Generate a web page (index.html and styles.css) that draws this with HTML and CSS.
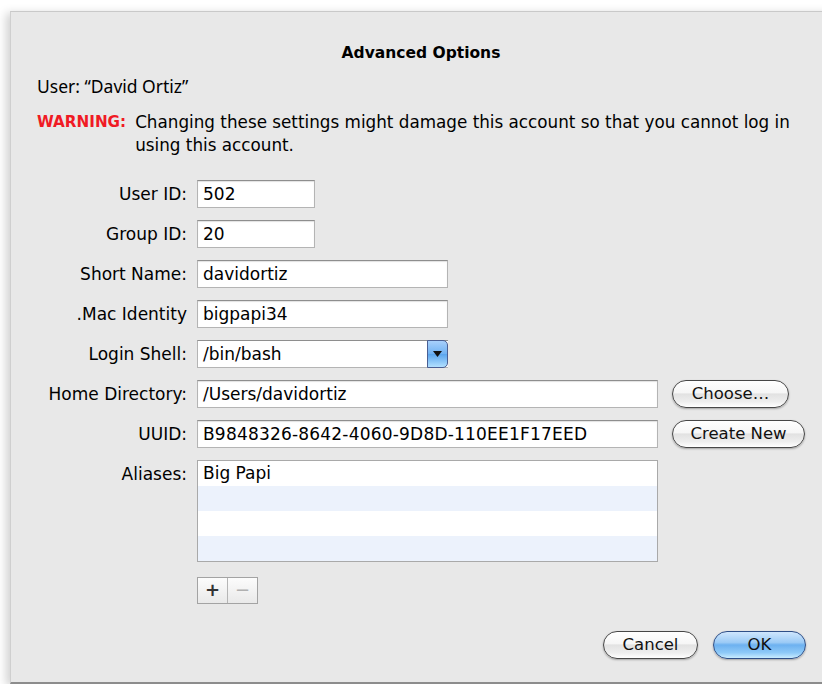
FILE: index.html
```html
<!DOCTYPE html>
<html lang="en">
<head>
<meta charset="utf-8">
<title>Advanced Options</title>
<link rel="stylesheet" href="styles.css">
</head>
<body>
<div class="sheet">
  <h1 class="title">Advanced Options</h1>
  <p class="user">User: “David Ortiz”</p>
  <div class="warning">
    <span class="warn-tag">WARNING:</span>
    <span class="warn-text">Changing these settings might damage this account so that you cannot log in using this account.</span>
  </div>

  <div class="form">
    <div class="label">User ID:</div>
    <div class="field"><div class="input w-id">502</div></div>

    <div class="label">Group ID:</div>
    <div class="field"><div class="input w-id">20</div></div>

    <div class="label">Short Name:</div>
    <div class="field"><div class="input w-mid">davidortiz</div></div>

    <div class="label">.Mac Identity</div>
    <div class="field"><div class="input w-mid">bigpapi34</div></div>

    <div class="label">Login Shell:</div>
    <div class="field">
      <div class="popup w-mid">
        <span class="popup-value">/bin/bash</span>
        <span class="popup-arrow"><svg width="9" height="6" viewBox="0 0 9 6"><path d="M0 0H9L4.5 6Z" fill="#111"/></svg></span>
      </div>
    </div>

    <div class="label">Home Directory:</div>
    <div class="field">
      <div class="input w-long">/Users/davidortiz</div>
      <button class="aqua btn-choose">Choose…</button>
    </div>

    <div class="label">UUID:</div>
    <div class="field">
      <div class="input w-long uuid">B9848326-8642-4060-9D8D-110EE1F17EED</div>
      <button class="aqua btn-create">Create New</button>
    </div>

    <div class="label label-top">Aliases:</div>
    <div class="field field-col">
      <div class="list w-long">
        <div class="row">Big Papi</div>
        <div class="row alt"></div>
        <div class="row"></div>
        <div class="row alt"></div>
      </div>
      <div class="segment">
        <span class="seg seg-add">+</span>
        <span class="seg seg-remove">−</span>
      </div>
    </div>
  </div>

  <div class="actions">
    <button class="aqua btn-cancel">Cancel</button>
    <button class="aqua default btn-ok">OK</button>
  </div>
</div>
</body>
</html>
```

FILE: styles.css
```css
html, body {
  margin: 0;
  padding: 0;
  background: #ffffff;
}

body {
  font-family: "DejaVu Sans", "Noto Sans", sans-serif;
  color: #000;
  padding: 11px 0 0 10px;
  overflow: hidden;
}

.sheet {
  box-sizing: border-box;
  width: 830px;
  height: 673px;
  background: #e8e8e8;
  border-top: 1px solid #c9c9c9;
  border-left: 1px solid #cfcfcf;
  border-bottom: 2px solid #8c8c8c;
  box-shadow: -4px 2px 9px rgba(0, 0, 0, 0.18);
  padding: 31px 0 0 0;
}

.title {
  margin: 0;
  width: 820px;
  text-align: center;
  font-size: 15.5px;
  font-weight: bold;
  line-height: 20px;
}

.user {
  margin: 13px 0 0 26px;
  font-family: "Noto Sans", "DejaVu Sans", sans-serif;
  font-size: 17.5px;
  line-height: 20px;
}

.warning {
  display: flex;
  gap: 9px;
  margin: 15px 0 0 26px;
  font-size: 16.8px;
  line-height: 23px;
  width: 775px;
}

.warn-tag {
  color: #f01a24;
  font-weight: bold;
  font-size: 15.2px;
  flex: none;
}

.warn-text {
  flex: 1;
}

.form {
  display: grid;
  grid-template-columns: 176px 1fr;
  column-gap: 10px;
  row-gap: 12px;
  margin-top: 23px;
  font-size: 17px;
}

.label {
  text-align: right;
  line-height: 28px;
  height: 28px;
  white-space: nowrap;
}

.field {
  display: flex;
  align-items: center;
  gap: 14px;
}

.field-col {
  flex-direction: column;
  align-items: flex-start;
  gap: 15px;
}

.input {
  box-sizing: border-box;
  height: 28px;
  background: #fff;
  border: 1px solid #b4b4b4;
  border-top-color: #8e8e8e;
  box-shadow: inset 0 1px 1px rgba(0, 0, 0, 0.12);
  padding: 0 5px;
  line-height: 26px;
  white-space: nowrap;
}

.uuid { letter-spacing: 0.2px; }

.w-id { width: 118px; }
.w-mid { width: 251px; }
.w-long { width: 461px; }

.popup {
  box-sizing: border-box;
  height: 28px;
  display: flex;
  background: #fff;
  border: 1px solid #b4b4b4;
  border-top-color: #8e8e8e;
  border-right: none;
}

.popup-value {
  flex: 1;
  padding: 0 5px;
  line-height: 26px;
}

.popup-arrow {
  box-sizing: border-box;
  width: 21px;
  margin: -1px 0 -1px 0;
  display: flex;
  align-items: center;
  justify-content: center;
  border: 1px solid #4a5f93;
  border-radius: 0 5px 5px 0;
  background: linear-gradient(#a8d0fb 0%, #6fb1f2 50%, #5aa5ee 51%, #b2e0ff 100%);
}

.aqua {
  box-sizing: border-box;
  height: 28px;
  font-family: "DejaVu Sans", sans-serif;
  font-size: 16.5px;
  color: #111;
  border: 1px solid #474747;
  border-radius: 14px;
  background: linear-gradient(#ffffff 0%, #f6f6f6 45%, #e2e2e2 50%, #eeeeee 80%, #ffffff 100%);
  box-shadow: 0 1px 2px rgba(0, 0, 0, 0.3);
  padding: 0;
  line-height: 24px;
}

.btn-choose { width: 117px; }
.btn-create { width: 133px; }

.list {
  box-sizing: border-box;
  height: 102px;
  border: 1px solid #a9a9a9;
  background: #fff;
  overflow: hidden;
}

.row {
  height: 25px;
  line-height: 25px;
  padding: 0 5px;
}

.row.alt { background: #ecf2fc; }

.segment {
  display: flex;
  box-sizing: border-box;
  height: 27px;
  border: 1px solid #a3a3a3;
  background: linear-gradient(#fcfcfc, #e9e9e9);
}

.seg {
  width: 29px;
  text-align: center;
  line-height: 24px;
  font-size: 18px;
  font-weight: bold;
}

.seg-add { color: #333; border-right: 1px solid #b5b5b5; }
.seg-remove { color: #b0b0b0; font-weight: normal; }

.actions {
  display: flex;
  gap: 15px;
  width: 795px;
  justify-content: flex-end;
  margin-top: 27px;
}

.btn-cancel { width: 95px; }
.btn-ok { width: 93px; }

.aqua.default {
  border-color: #2f4f87;
  background: linear-gradient(#cfe6fd 0%, #9ccbf6 40%, #6db1f0 50%, #8fcaf8 80%, #c9ecff 100%);
}
```
